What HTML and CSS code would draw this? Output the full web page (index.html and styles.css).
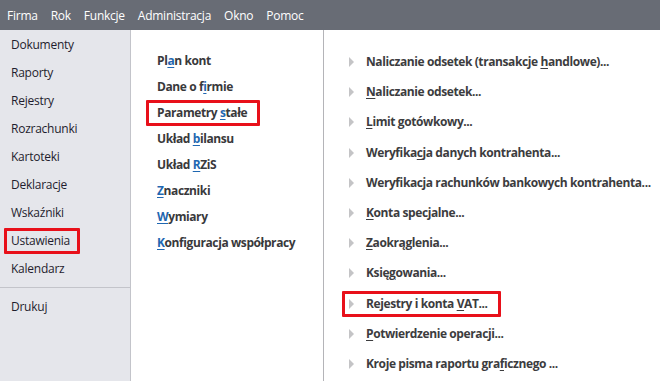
FILE: index.html
```html
<!DOCTYPE html>
<html lang="pl">

<head>
    <meta charset="UTF-8">
    <meta name="viewport" content="width=device-width, initial-scale=1.0">
    <title>Ustawienia</title>
    <link rel="stylesheet" href="styles.css">
</head>

<body>
    <div class="menubar">
        <span>Firma</span>
        <span>Rok</span>
        <span>Funkcje</span>
        <span>Administracja</span>
        <span>Okno</span>
        <span>Pomoc</span>
    </div>

    <div class="main">
        <div class="sidebar">
            <div class="side-item">Dokumenty</div>
            <div class="side-item">Raporty</div>
            <div class="side-item">Rejestry</div>
            <div class="side-item">Rozrachunki</div>
            <div class="side-item">Kartoteki</div>
            <div class="side-item">Deklaracje</div>
            <div class="side-item">Wskaźniki</div>
            <div class="side-item"><span class="marked">Ustawienia</span></div>
            <div class="side-item">Kalendarz</div>
            <div class="side-sep"></div>
            <div class="side-item">Drukuj</div>
        </div>

        <div class="groups">
            <div class="group-item">Pl<u>a</u>n kont</div>
            <div class="group-item">Dane o f<u>i</u>rmie</div>
            <div class="group-item"><span class="marked">Parametry <u>s</u>tałe</span></div>
            <div class="group-item">Układ <u>b</u>ilansu</div>
            <div class="group-item">Układ <u>R</u>ZiS</div>
            <div class="group-item"><u>Z</u>naczniki</div>
            <div class="group-item"><u>W</u>ymiary</div>
            <div class="group-item"><u>K</u>onfiguracja współpracy</div>
        </div>

        <div class="actions">
            <div class="action"><span class="arrow"></span>Naliczanie odsetek (transakcje <u>h</u>andlowe)...</div>
            <div class="action"><span class="arrow"></span><u>N</u>aliczanie odsetek...</div>
            <div class="action"><span class="arrow"></span><u>L</u>imit gotówkowy...</div>
            <div class="action"><span class="arrow"></span>Weryfika<u>c</u>ja danych kontrahenta...</div>
            <div class="action"><span class="arrow"></span>Weryfikacja rachunków bankowych kontrahenta...</div>
            <div class="action"><span class="arrow"></span><u>K</u>onta specjalne...</div>
            <div class="action"><span class="arrow"></span><u>Z</u>aokrąglenia...</div>
            <div class="action"><span class="arrow"></span>Księ<u>g</u>owania...</div>
            <div class="action"><span class="marked"><span class="arrow"></span>Rejestry i konta <u>V</u>AT...</span></div>
            <div class="action"><span class="arrow"></span><u>P</u>otwierdzenie operacji...</div>
            <div class="action"><span class="arrow"></span>Kroje pisma raportu gra<u>f</u>icznego ...</div>
        </div>
    </div>
</body>

</html>
```

FILE: styles.css
```css
* {
    box-sizing: border-box;
}

body {
    margin: 0;
    font-family: "Open Sans", "Noto Sans", sans-serif;
    font-size: 12px;
    letter-spacing: -0.25px;
    background-color: #ffffff;
    overflow: hidden;
}

u {
    text-decoration: underline;
    text-underline-offset: 2px;
}

.menubar {
    height: 30px;
    display: flex;
    align-items: center;
    background-color: #686c75;
    color: #ffffff;
}

.menubar span {
    padding: 0 6.5px;
}

.menubar span:first-child {
    padding-left: 7px;
}

.main {
    display: flex;
    height: 351px;
}

.sidebar {
    flex-shrink: 0;
    width: 131px;
    padding-top: 1px;
    background-color: #e5e6eb;
    border-right: 1px solid #c3c4ca;
    color: #1f1d2e;
}

.side-item {
    height: 28px;
    line-height: 28px;
    padding-left: 11px;
}

.side-sep {
    height: 1px;
    margin: 4px 0 5px;
    background-color: #c3c4ca;
}

.marked {
    display: inline-block;
    border: 3px solid #e8101a;
    border-radius: 1px;
    line-height: 20px;
}

.side-item .marked {
    margin: 0 -10px 0 -7px;
    padding: 0 7px 0 4px;
}

.groups {
    flex-shrink: 0;
    width: 193px;
    padding-top: 18px;
    border-right: 1px solid #b4b4b8;
    color: #39393b;
    font-weight: 700;
    letter-spacing: -0.4px;
}

.group-item {
    height: 26px;
    line-height: 26px;
    padding-left: 26px;
}

.group-item u {
    color: #1f67b1;
}

.group-item .marked {
    margin: 0 -13px 0 -11px;
    padding: 0 10px 0 8px;
}

.actions {
    flex: 1;
    min-width: 0;
    padding-top: 17px;
    color: #3c3c3e;
    font-weight: 700;
    letter-spacing: -0.4px;
}

.action {
    height: 30.2px;
    line-height: 30.2px;
    padding-left: 25px;
    white-space: nowrap;
}

.arrow {
    display: inline-block;
    width: 0;
    height: 0;
    margin-right: 12px;
    border-top: 5px solid transparent;
    border-bottom: 5px solid transparent;
    border-left: 5px solid #c4c4c6;
    vertical-align: -1px;
}

.action .marked {
    margin: 0 -12px 0 -7px;
    padding: 0 10px 0 4px;
}
```
